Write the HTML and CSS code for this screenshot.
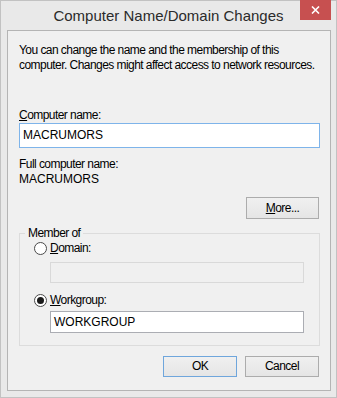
FILE: index.html
```html
<!DOCTYPE html>
<html>
<head>
<meta charset="utf-8">
<link rel="stylesheet" href="styles.css">
</head>
<body>
<div class="window">
  <div class="titlebar">
    <span class="tb-spacer"></span>
    <div class="title">Computer Name/Domain Changes</div>
    <div class="tb-controls">
      <button class="close" aria-label="Close">
        <svg width="9" height="8" viewBox="0 0 9 8"><path d="M1 0.5 L8 7.5 M8 0.5 L1 7.5" stroke="#fff" stroke-width="1.6" fill="none"/></svg>
      </button>
    </div>
  </div>
  <div class="client">
    <p class="intro">You can change the name and the membership of this<br>computer. Changes might affect access to network resources.</p>
    <div class="label first"><u>C</u>omputer name:</div>
    <div class="textbox focused">MACRUMORS</div>
    <div class="label full">Full computer name:</div>
    <div class="label value">MACRUMORS</div>
    <div class="more-row"><button class="btn more"><u>M</u>ore...</button></div>
    <fieldset class="group">
      <legend>Member of</legend>
      <div class="opt"><span class="radio"></span><span class="opt-label"><u>D</u>omain:</span></div>
      <div class="textbox small disabled"></div>
      <div class="opt opt2"><span class="radio checked"></span><span class="opt-label"><u>W</u>orkgroup:</span></div>
      <div class="textbox small wg">WORKGROUP</div>
    </fieldset>
    <div class="actions">
      <button class="btn default">OK</button>
      <button class="btn">Cancel</button>
    </div>
  </div>
</div>
</body>
</html>
```
FILE: styles.css
```css
html, body {
  margin: 0;
  padding: 0;
  background: #e9e9e9;
}
body {
  font-family: "Liberation Sans", Arial, sans-serif;
  font-size: 12px;
  color: #000;
}
.window {
  width: 337px;
  height: 398px;
  box-sizing: border-box;
  border: 1px solid #c2c2c2;
  background: #e9e9e9;
  display: flex;
  flex-direction: column;
}
.titlebar {
  height: 29px;
  flex: none;
  display: grid;
  grid-template-columns: 1fr auto 1fr;
  padding: 0 5px;
}
.title {
  font-size: 15px;
  line-height: 20px;
  padding-top: 5px;
  color: #2b2b2b;
  white-space: nowrap;
}
.tb-controls {
  display: flex;
  justify-content: flex-end;
  align-items: flex-start;
}
.close {
  width: 31px;
  height: 20px;
  margin-top: -1px;
  border: 0;
  padding: 0;
  background: #c75050;
  display: flex;
  align-items: center;
  justify-content: center;
}
.client {
  flex: 1;
  margin: 0 5px 6px 6px;
  border: 1px solid #b4b4b4;
  background: #f0f0f0;
  padding: 12px 10px 12px 11px;
  display: flex;
  flex-direction: column;
  line-height: 15px;
  letter-spacing: -0.55px;
}
.intro {
  margin: 0;
  white-space: nowrap;
}
.label {
  margin: 0;
}
.label.first {
  margin-top: 35px;
}
.label.full {
  margin-top: 9px;
}
.label.value {
  letter-spacing: 0;
}
.textbox {
  height: 25px;
  box-sizing: border-box;
  border: 1px solid #abadb3;
  background: #fff;
  padding: 0 3px;
  display: flex;
  align-items: center;
  letter-spacing: 0;
}
.textbox.focused {
  border-color: #7eb4ea;
}
.textbox.small {
  width: 254px;
  height: 21px;
  margin-left: 25px;
  margin-top: 6px;
}
.textbox.wg {
  height: 22px;
  margin-top: 3px;
}
.textbox.disabled {
  background: #f0f0f0;
  border-color: #d9d9d9;
}
.more-row {
  display: flex;
  justify-content: flex-end;
  margin-top: 10px;
}
.btn {
  width: 74px;
  height: 22px;
  box-sizing: border-box;
  border: 1px solid #acacac;
  background: linear-gradient(#f0f0f0, #e5e5e5);
  font: inherit;
  letter-spacing: inherit;
  color: #000;
  padding: 0;
  margin-right: 1px;
}
.btn.more {
  width: 73px;
}
.btn.default {
  border-color: #6fa6dc;
}
.group {
  margin: 7px 0 0;
  border: 1px solid #dcdcdc;
  padding: 0 15px 12px 5px;
}
.group legend {
  padding: 0 3px;
  line-height: 15px;
}
.opt {
  display: flex;
  align-items: center;
  height: 15px;
  margin-left: 9px;
}
.opt2 {
  margin-top: 10px;
}
.radio {
  flex: none;
  width: 13px;
  height: 13px;
  box-sizing: border-box;
  border-radius: 50%;
  border: 1px solid #4a4a4a;
  background: #fff;
  margin-right: 3px;
  display: flex;
  align-items: center;
  justify-content: center;
}
.radio.checked::after {
  content: "";
  width: 7px;
  height: 7px;
  border-radius: 50%;
  background: #1a1a1a;
}
.actions {
  display: flex;
  justify-content: flex-end;
  gap: 7px;
  margin-top: 10px;
}
.actions .btn {
  height: 21px;
}
```
